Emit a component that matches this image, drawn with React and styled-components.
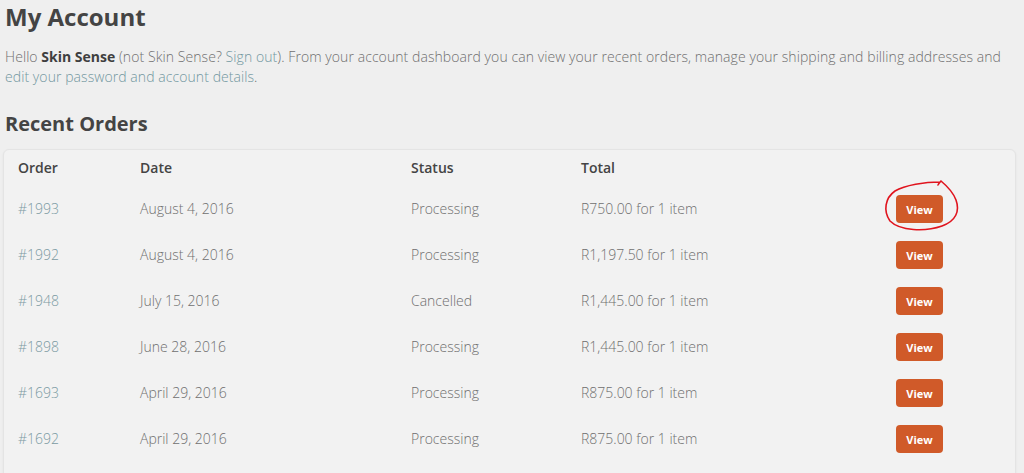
import React from "react";
import styled, { createGlobalStyle } from "styled-components";

const GlobalStyle = createGlobalStyle`
    html, body {
        margin: 0;
        padding: 0;
        background: #efefef;
    }
    body {
        font-family: "Open Sans", "Noto Sans", "Liberation Sans", sans-serif;
        color: #777777;
    }
`;

const Page = styled.div`
    padding: 0 5px;
    width: 1024px;
    box-sizing: border-box;
`;

const Heading = styled.h1`
    margin: 0;
    font-size: 24px;
    line-height: 34px;
    font-weight: 700;
    color: #444444;
`;

const Intro = styled.p`
    margin: 13px 0 0;
    max-width: 1004px;
    font-size: 14px;
    line-height: 20px;
    font-weight: 300;
    letter-spacing: 0.07px;
    color: #6f6f6f;
`;

const Strong = styled.strong`
    color: #3f3f3f;
    font-weight: 700;
    letter-spacing: 0;
`;

const Link = styled.a`
    color: #7297a0;
    text-decoration: none;
`;

const SubHeading = styled.h2`
    margin: 22px 0 0;
    font-size: 20px;
    line-height: 30px;
    font-weight: 700;
    color: #444444;
`;

const Card = styled.div`
    margin: 10px 3px 0 -2px;
    padding-bottom: 20px;
    background: #f2f2f2;
    border: 1px solid #e4e4e4;
    border-radius: 6px;
    box-shadow: 0 1px 3px rgba(0, 0, 0, 0.05);
`;

const Table = styled.table`
    width: 100%;
    border-collapse: collapse;
    font-size: 14px;
`;

const HeadCell = styled.th`
    text-align: left;
    font-weight: 600;
    color: #444444;
    height: 35px;
    padding: 0;
    padding-left: ${({ first }) => (first ? "14px" : "0")};
    width: ${({ w }) => w || "auto"};
    box-sizing: border-box;
`;

const Cell = styled.td`
    height: 46px;
    padding: 0;
    padding-left: ${({ first }) => (first ? "14px" : "0")};
    color: #6f6f6f;
    font-weight: 300;
    vertical-align: middle;
`;

const OrderLink = styled.a`
    color: #7b9aa2;
    text-decoration: none;
`;

const ButtonWrap = styled.div`
    position: relative;
    display: inline-block;
`;

const ViewButton = styled.button`
    width: 47px;
    height: 28px;
    border: none;
    border-radius: 4px;
    background: #d05a29;
    color: #ffffff;
    font-family: "Open Sans", "Liberation Sans", sans-serif;
    font-weight: 700;
    font-size: 11px;
    padding: 0;
    margin-top: 2px;
    cursor: pointer;
`;

const Scribble = styled.svg`
    position: absolute;
    left: -16px;
    top: -17px;
    width: 82px;
    height: 58px;
    pointer-events: none;
    overflow: visible;
`;

const orders = [
    { id: "#1993", date: "August 4, 2016", status: "Processing", total: "R750.00 for 1 item", marked: true },
    { id: "#1992", date: "August 4, 2016", status: "Processing", total: "R1,197.50 for 1 item" },
    { id: "#1948", date: "July 15, 2016", status: "Cancelled", total: "R1,445.00 for 1 item" },
    { id: "#1898", date: "June 28, 2016", status: "Processing", total: "R1,445.00 for 1 item" },
    { id: "#1693", date: "April 29, 2016", status: "Processing", total: "R875.00 for 1 item" },
    { id: "#1692", date: "April 29, 2016", status: "Processing", total: "R875.00 for 1 item" },
];

function App() {
    return (
        <Page>
            <GlobalStyle />
            <Heading>My Account</Heading>
            <Intro>
                Hello <Strong>Skin Sense</Strong> (not Skin Sense? <Link href="#">Sign out</Link>). From your
                account dashboard you can view your recent orders, manage your shipping and billing addresses and{" "}
                <Link href="#">edit your password and account details</Link>.
            </Intro>

            <SubHeading>Recent Orders</SubHeading>
            <Card>
                <Table>
                    <thead>
                        <tr>
                            <HeadCell first w="136px">Order</HeadCell>
                            <HeadCell w="271px">Date</HeadCell>
                            <HeadCell w="170px">Status</HeadCell>
                            <HeadCell w="315px">Total</HeadCell>
                            <HeadCell></HeadCell>
                        </tr>
                    </thead>
                    <tbody>
                        {orders.map((o) => (
                            <tr key={o.id}>
                                <Cell first><OrderLink href="#">{o.id}</OrderLink></Cell>
                                <Cell>{o.date}</Cell>
                                <Cell>{o.status}</Cell>
                                <Cell>{o.total}</Cell>
                                <Cell>
                                    <ButtonWrap>
                                        <ViewButton>View</ViewButton>
                                        {o.marked && (
                                            <Scribble viewBox="0 0 82 58">
                                                <path
                                                    d="M60 6 C45 6 25 9 15 15 C5 22 3 35 10 45 C20 55 45 56 62 50 C76 45 80 35 76 24 C73 16 67 10 61 5 C60 6 59 7 58 9"
                                                    fill="none"
                                                    stroke="#e0141e"
                                                    strokeWidth="1.6"
                                                    strokeLinecap="round"
                                                />
                                            </Scribble>
                                        )}
                                    </ButtonWrap>
                                </Cell>
                            </tr>
                        ))}
                    </tbody>
                </Table>
            </Card>
        </Page>
    );
}

export default App;
